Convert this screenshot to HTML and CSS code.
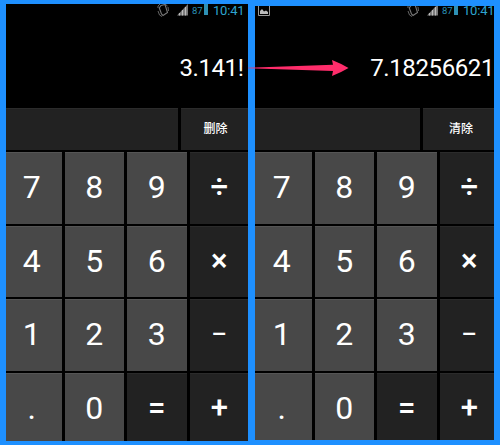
FILE: index.html
```
<!DOCTYPE html>
<html lang="zh-CN">
<head>
<meta charset="utf-8">
<title>Calculator</title>
<link rel="stylesheet" href="styles.css">
</head>
<body>
<svg width="0" height="0" class="defs">
  <defs>
    <symbol id="vibrate" viewBox="0 0 12 14">
      <path d="M4 2.500 L8 1.500 L10.5 9.500 L6 12.500 L4.500 11 L2.3 5 Z" fill="none" stroke="#777" stroke-width="1.1"/>
      <path d="M1 5 L1 3 L3 1 M11 4 L11.500 8 M1 8 L2.5 12 L5 13.500 M8 1 L10.5 3" fill="none" stroke="#666" stroke-width="1"/>
    </symbol>
    <symbol id="signal" viewBox="0 0 12 12">
      <path d="M0 11.500 L11 0 V11.500 Z" fill="#777"/>
      <path d="M2.5 9V11.500M5.5 6V11.500M8.5 3V11.500" stroke="#bbb" stroke-width="1.2"/>
    </symbol>
  </defs>
</svg>
<main class="board">
  <section class="phone phone-left">
    <div class="screen">
      <header class="status">
        <svg class="vibrate"><use href="#vibrate"/></svg>
        <svg class="signal"><use href="#signal"/></svg>
        <span class="level">87</span><i class="battery"></i>
        <span class="clock">10:41</span>
      </header>
      <div class="display">3.141!</div>
      <div class="functions"><div class="blank"></div><div class="action">删除</div></div>
      <div class="keys">
        <div class="key">7</div><div class="key">8</div><div class="key">9</div><div class="key op">÷</div>
        <div class="key">4</div><div class="key">5</div><div class="key">6</div><div class="key op">×</div>
        <div class="key">1</div><div class="key">2</div><div class="key">3</div><div class="key op minus">−</div>
        <div class="key">.</div><div class="key">0</div><div class="key op equals">=</div><div class="key op">+</div>
      </div>
    </div>
  </section>
  <section class="phone phone-right">
    <div class="screen">
      <header class="status">
        <svg class="picture" viewBox="0 0 12 12"><path d="M.5 0V11.5H11.5V0" fill="none" stroke="#999"/><path d="M2 10V7L4 5L6 7.5L8 6.5L10 8V10Z" fill="#bbb"/></svg>
        <svg class="vibrate"><use href="#vibrate"/></svg>
        <svg class="signal"><use href="#signal"/></svg>
        <span class="level">87</span><i class="battery"></i>
        <span class="clock">10:41</span>
      </header>
      <div class="display">7.18256621</div>
      <div class="functions"><div class="blank"></div><div class="action">清除</div></div>
      <div class="keys">
        <div class="key">7</div><div class="key">8</div><div class="key">9</div><div class="key op">÷</div>
        <div class="key">4</div><div class="key">5</div><div class="key">6</div><div class="key op">×</div>
        <div class="key">1</div><div class="key">2</div><div class="key">3</div><div class="key op minus">−</div>
        <div class="key">.</div><div class="key">0</div><div class="key op equals">=</div><div class="key op">+</div>
      </div>
    </div>
  </section>
  <svg class="arrow" viewBox="0 0 104 20"><path d="M1 9.7 L86 6.8 L85 2 Q94 5.5 101.500 10 Q94 14.500 85 18 L86 13 L1 10.300 Z" fill="#ff2d6b"/></svg>
</main>
</body>
</html>
```
FILE: styles.css
```
body {
  margin: 0;
  background: #1e90ff;
  font-family: Roboto, "Noto Sans CJK SC", sans-serif;
  color: #fff;
}
.defs { position: absolute; }
.board {
  position: relative;
  display: flex;
  gap: 7px;
  box-sizing: border-box;
  width: 500px;
  height: 445px;
  padding-left: 5.5px;
  overflow: hidden;
}
.phone { overflow: hidden; background: #000; }
.phone-left { width: 242.5px; height: 437px; margin-top: 4px; }
.phone-right { width: 238.500px; height: 434px; margin-top: 6px; }
.screen { width: 249px; margin: -4px 0 0 -3.5px; }
.phone-right .screen { margin: -6px 0 0 -3px; }
.status {
  display: flex;
  align-items: flex-start;
  box-sizing: border-box;
  height: 20px;
  padding-left: 4px;
}
.status > * { flex: none; }
.picture { width: 12px; height: 12px; margin: 4px 0 0 2px; }
.vibrate { width: 12px; height: 14px; margin: 3px 0 0 151px; }
.picture + .vibrate { margin-left: 137px; }
.signal { width: 12px; height: 12px; margin: 4px 0 0 8px; }
.level { margin: 4px 0 0 3px; width: 11px; font-size: 9.500px; line-height: 13px; color: #2b91b5; }
.battery { width: 4px; height: 11px; margin: 4px 0 0 1px; background: #2e91b5; }
.clock { margin: 3px 0 0 5px; font-size: 13px; letter-spacing: -.2px; line-height: 15px; color: #2da5cf; white-space: nowrap; }
.display {
  box-sizing: border-box;
  width: 246px;
  height: 88px;
  padding: 34px 4.500px 0 0;
  font-size: 24px;
  line-height: 28px;
  letter-spacing: -.4px;
  text-align: right;
}
.phone-right .display { width: 245px; padding-right: 3px; }
.functions {
  display: grid;
  grid-template-columns: 176px 1fr;
  grid-template-rows: 42px;
  gap: 3px;
  height: 42px;
  margin-bottom: 2px;
}
.phone-right .functions { grid-template-columns: 168px 1fr; }
.blank, .action { background: #222; box-shadow: inset 0 1px #2b2b2b; }
.action { padding-left: 22.500px; font-size: 12px; font-weight: 500; line-height: 43px; }
.phone-right .action { padding-left: 26px; }
.keys {
  display: grid;
  grid-template-columns: repeat(4, 59.500px);
  grid-auto-rows: 71.500px;
  gap: 2px 3px;
}
.key {
  background: #484848;
  box-shadow: inset 0 1px #555;
  font-size: 32px;
  line-height: 71.500px;
  text-align: center;
}
.op { background: #222; box-shadow: inset 0 1px #2b2b2b; font-size: 31px; font-weight: 500; line-height: 70.500px; }
.minus { font-size: 29px; font-weight: 400; }
.arrow { position: absolute; left: 247px; top: 58px; width: 104px; height: 20px; }
```
